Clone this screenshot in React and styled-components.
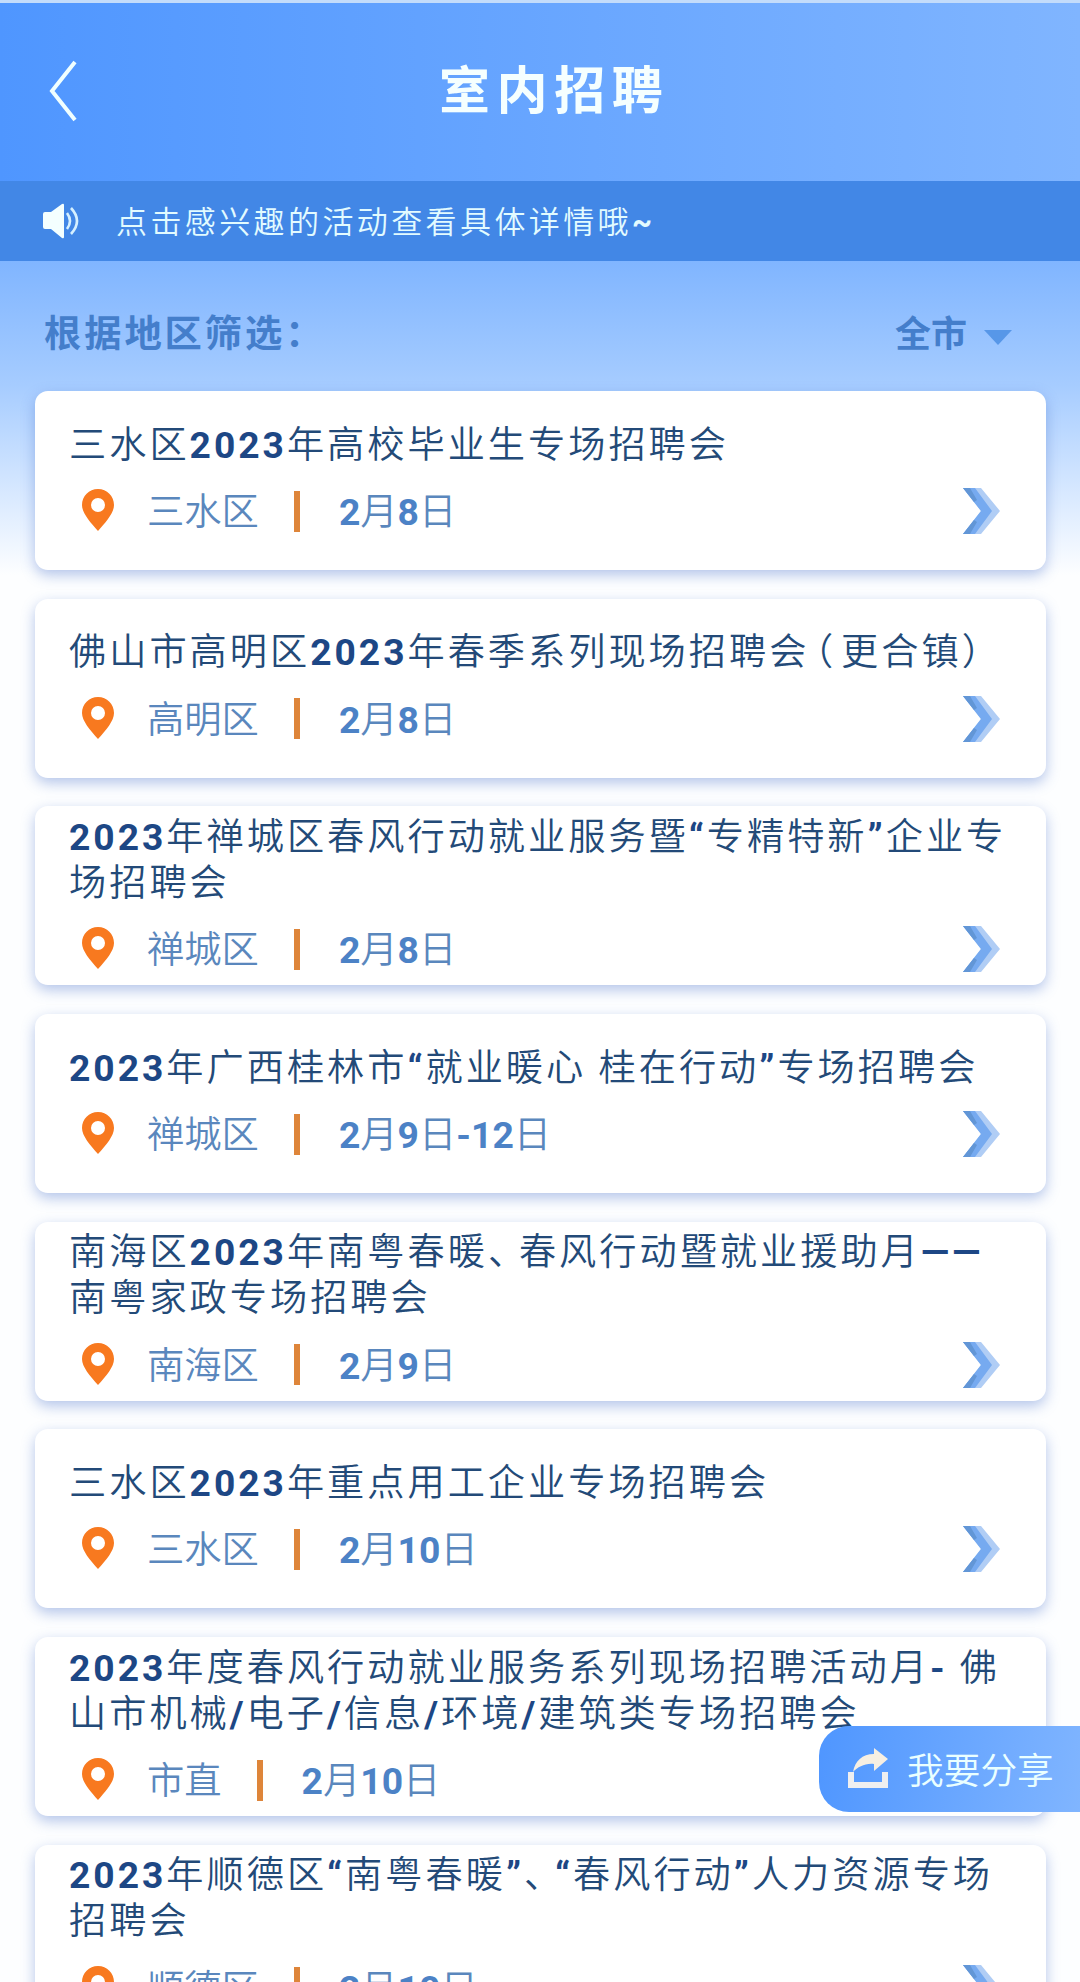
import styled, { createGlobalStyle } from "styled-components";

const EVENTS = [
    { title: "三水区2023年高校毕业生专场招聘会", area: "三水区", date: "2月8日" },
    { title: "佛山市高明区2023年春季系列现场招聘会（更合镇）", area: "高明区", date: "2月8日" },
    { title: "2023年禅城区春风行动就业服务暨“专精特新”企业专\n场招聘会", area: "禅城区", date: "2月8日" },
    { title: "2023年广西桂林市“就业暖心 桂在行动”专场招聘会", area: "禅城区", date: "2月9日-12日" },
    { title: "南海区2023年南粤春暖、春风行动暨就业援助月——\n南粤家政专场招聘会", area: "南海区", date: "2月9日" },
    { title: "三水区2023年重点用工企业专场招聘会", area: "三水区", date: "2月10日" },
    { title: "2023年度春风行动就业服务系列现场招聘活动月- 佛\n山市机械/电子/信息/环境/建筑类专场招聘会", area: "市直", date: "2月10日" },
    { title: "2023年顺德区“南粤春暖”、“春风行动”人力资源专场\n招聘会", area: "顺德区", date: "2月10日" },
];

// digits and latin marks are bold, full width marks are a little tighter
const Mixed = ({ text }) =>
    text.split(/([ -~“”—]+|[（）、])/).map((part, i) => {
        if (i % 2 === 0) return part;
        return /[（）、]/.test(part)
            ? <Mark key={i} $open={part === "（"}>{part}</Mark>
            : <Latin key={i}>{part}</Latin>;
    });

const EventCard = ({ title, area, date }) => (
    <Card>
        <CardTitle><Mixed text={title} /></CardTitle>
        <Info>
            <Pin viewBox="0 0 32 42">
                <path
                    fillRule="evenodd"
                    d="M16 0C7 0 0 7 0 16c0 8 8 17 16 26 8-9 16-18 16-26C32 7 25 0 16 0zm0 9a7 7 0 1 1 0 14 7 7 0 0 1 0-14z"
                />
            </Pin>
            <Area>{area}</Area>
            <Divider />
            <When><Mixed text={date} /></When>
            <Chevron viewBox="0 0 37 46">
                <path d="M0 0H18L37 23L18 46H0L18 23Z" fill="#b0cdf5" />
                <path d="M0 0H12L29 23L12 46H0L18 23Z" fill="#76aaf0" />
                <path d="M0 0H7L14 12L11 14ZM0 46H7L14 34L11 32Z" fill="#6296d6" />
            </Chevron>
        </Info>
    </Card>
);

const App = () => {
    return (
        <Wrapper>
            <GlobalStyle />
            <Header>
                <Back viewBox="0 0 28 62">
                    <path d="M26 2L3 31L26 60" />
                </Back>
                <PageTitle>室内招聘</PageTitle>
            </Header>
            <Notice>
                <Speaker viewBox="0 0 36 36">
                    <path d="M0 11Q0 9 2 9H8L19 1Q21 0 21 2V34Q21 36 19 35L8 26H2Q0 26 0 24Z" fill="#f4ffff" />
                    <path d="M24 10Q30 18 24 26M28 5Q40 18 28 31" fill="none" stroke="#d5f0ff" strokeWidth="2.6" />
                </Speaker>
                <NoticeText>点击感兴趣的活动查看具体详情哦<b>~</b></NoticeText>
            </Notice>
            <Filter>
                <FilterLabel>根据地区筛选：</FilterLabel>
                <FilterValue>全市</FilterValue>
                <Caret />
            </Filter>
            <List>
                {EVENTS.map((event) => <EventCard key={event.title} {...event} />)}
            </List>
            <Share>
                <ShareIcon viewBox="0 0 40 40">
                    <path d="M0 24H6V34H34V24H40V40H0Z" />
                    <path d="M26 0L40 11L26 23V16C17 15 10 19 5 24C7 13 14 6 26 6Z" fill="#f7efe2" />
                </ShareIcon>
                我要分享
            </Share>
        </Wrapper>
    );
};

const GlobalStyle = createGlobalStyle`
    body {
        margin: 0;
        overflow: hidden;
    }
`;
const Wrapper = styled.div`
    position: relative;
    width: 1080px;
    height: 1982px;
    overflow: hidden;
    font-family: Roboto, 'Noto Sans CJK SC', sans-serif;
    font-weight: 350;
    background: linear-gradient(180deg, #80b5ff 261px, #a6ccff 385px, #fdfeff 575px, #fdfeff 100%);
`;
const Header = styled.div`
    display: flex;
    align-items: center;
    box-sizing: border-box;
    height: 181px;
    padding: 0 0 2px 49px;
    border-top: 3px solid #c3dcfb;
    background: linear-gradient(90deg, #4f96ff, #80b5ff);
`;
const Back = styled.svg`
    width: 28px;
    height: 62px;
    fill: none;
    stroke: #f0ffff;
    stroke-width: 4;
`;
const PageTitle = styled.div`
    margin: 0 0 8px 362px;
    font-size: 51px;
    font-weight: 700;
    letter-spacing: 6.6px;
    color: #f5ffff;
`;
const Notice = styled.div`
    display: flex;
    align-items: center;
    height: 80px;
    padding-left: 43px;
    background: #4287e6;
`;
const Speaker = styled.svg`
    width: 36px;
    height: 36px;
`;
const NoticeText = styled.div`
    margin: 0 0 4px 37px;
    font-size: 31px;
    letter-spacing: 3.4px;
    color: #e2fbff;
`;
const Filter = styled.div`
    display: flex;
    align-items: center;
    height: 130px;
    padding: 0 68px 0 44px;
    box-sizing: border-box;
    color: #447ecb;
    font-size: 37.3px;
    font-weight: 600;
`;
const FilterLabel = styled.div`
    flex: 1;
    margin-top: 10px;
    letter-spacing: 2.9px;
`;
const FilterValue = styled.div`
    margin-top: 10px;
    font-size: 36px;
`;
const Caret = styled.div`
    margin: 23px 0 0 17px;
    border: 14px solid transparent;
    border-top: 15px solid #5797e8;
    border-bottom: 0;
`;
const List = styled.div`
    display: flex;
    flex-direction: column;
    gap: 28.7px;
    padding: 0 34px 0 35px;
`;
const Card = styled.div`
    display: flex;
    flex-direction: column;
    justify-content: center;
    flex: none;
    height: 179px;
    padding: 0 34px 0 35px;
    border-radius: 13px;
    background: #fff;
    box-shadow: 0 5px 14px rgba(70, 110, 200, 0.4);
`;
const CardTitle = styled.div`
    margin-left: -1px;
    padding-top: 1px;
    white-space: pre;
    font-size: 37.2px;
    line-height: 46px;
    letter-spacing: 3px;
    color: #234a78;
`;
const Latin = styled.span`
    font-weight: 700;
    color: #1d4785;
`;
const Mark = styled.span`
    margin-left: ${(props) => (props.$open ? "-13.5px" : "0")};
    letter-spacing: ${(props) => (props.$open ? "8px" : "-6.2px")};
`;
const Info = styled.div`
    display: flex;
    align-items: center;
    height: 57px;
    margin-top: 16px;
    padding: 0 12px 0 12px;
    font-size: 37.3px;
    line-height: 57px;
    color: #5a87bd;

    ${Latin} {
        color: #4c82c6;
    }
`;
const Pin = styled.svg`
    width: 32px;
    height: 42px;
    margin-top: -4px;
    fill: #f8791f;
`;
const Area = styled.div`
    margin: 1px 0 0 33px;
`;
const Divider = styled.div`
    width: 6px;
    height: 41px;
    margin: -2px 39px 0 35px;
    background: #de853a;
`;
const When = styled.div`
    flex: 1;
    margin-top: 1px;
`;
const Chevron = styled.svg`
    width: 37px;
    height: 46px;
    margin-top: -2px;
`;
const Share = styled.div`
    position: absolute;
    right: 0;
    top: 1726px;
    display: flex;
    align-items: center;
    box-sizing: border-box;
    width: 261px;
    height: 86px;
    padding: 0 0 2px 29px;
    gap: 19px;
    border-radius: 30px 0 0 30px;
    font-size: 36.7px;
    color: #eaffff;
    background: linear-gradient(100deg, #4f96ff, #80b5ff);
`;
const ShareIcon = styled.svg`
    width: 40px;
    height: 40px;
    fill: #efeff0;
`;

export default App;
